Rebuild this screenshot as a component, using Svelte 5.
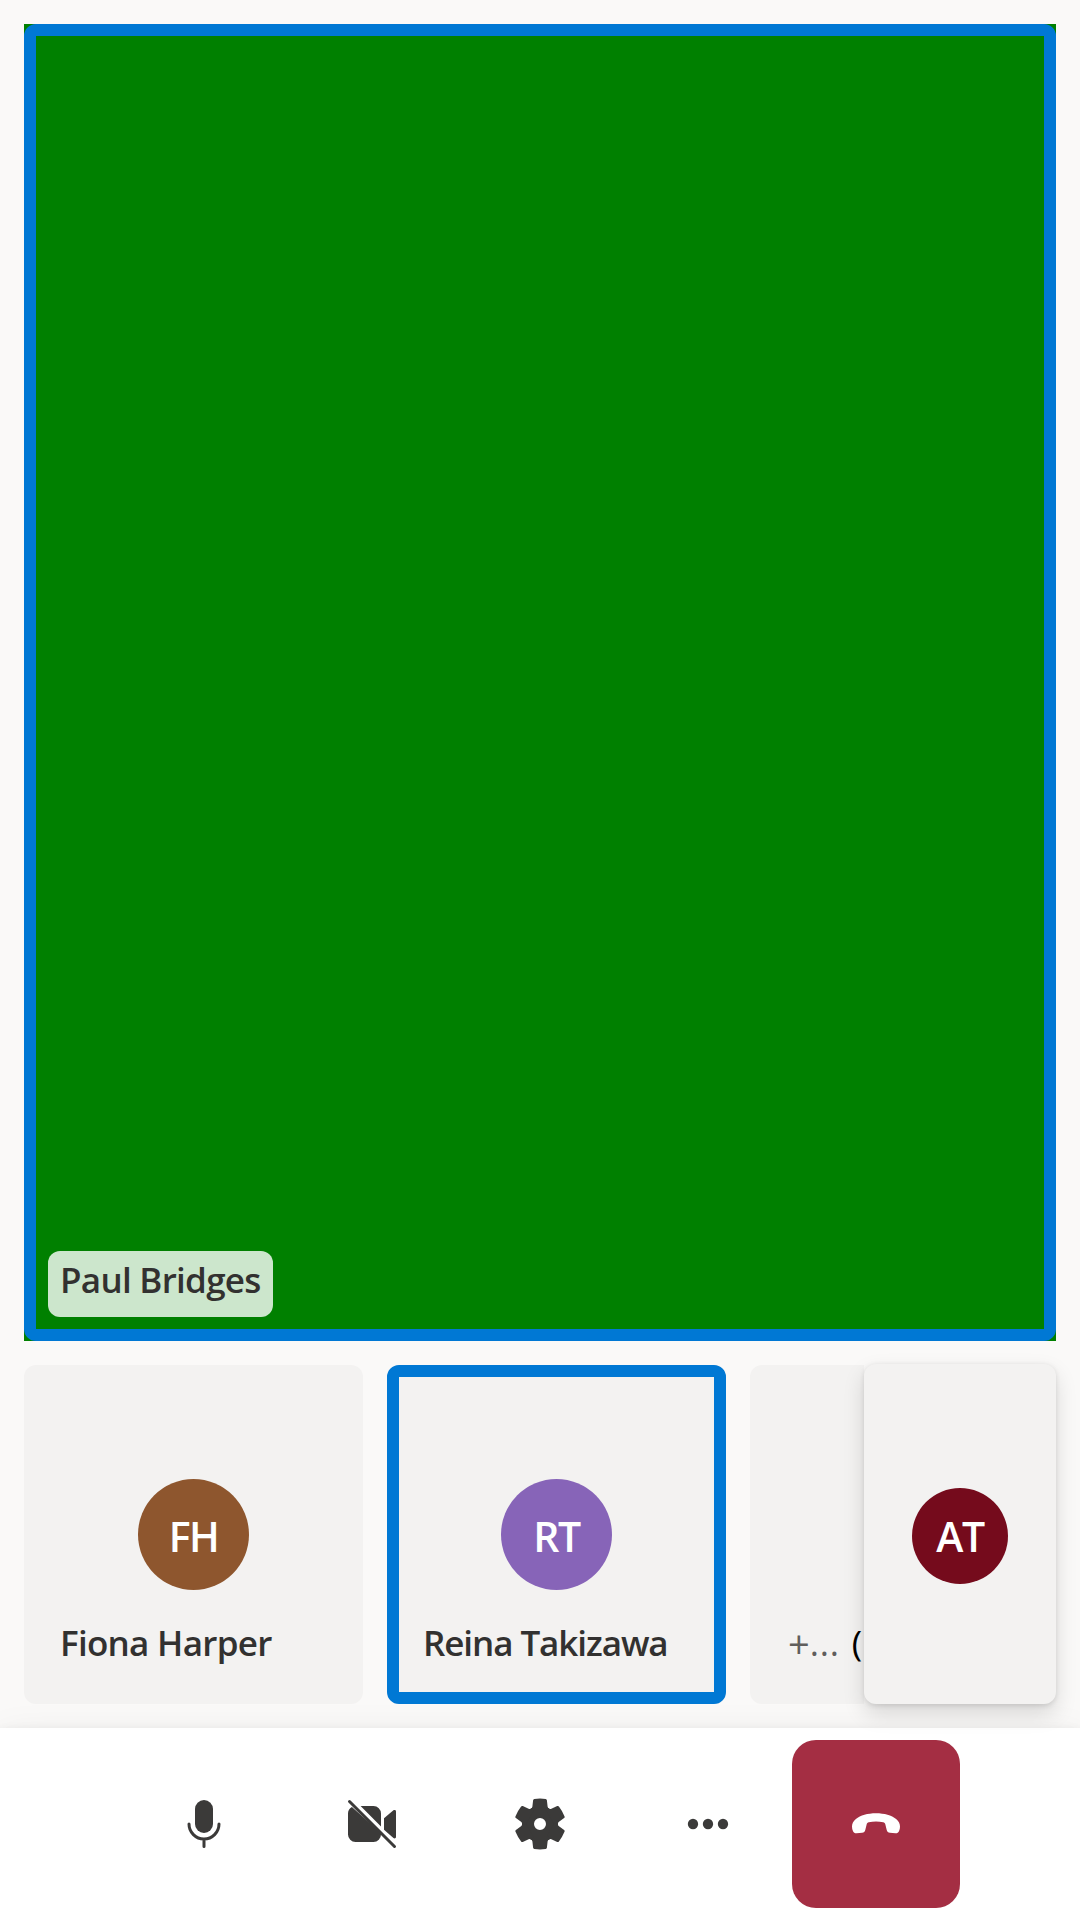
<script>
  const people = [
    { name: 'Fiona Harper', initials: 'FH', tone: 'brown', speaking: false },
    { name: 'Reina Takizawa', initials: 'RT', tone: 'purple', speaking: true }
  ];
  const teeth = [0, 60, 120, 180, 240, 300];
</script>

<div class="call">
  <main>
    <section class="stage speaking">
      <div class="tag">Paul Bridges</div>
    </section>
    <section class="gallery">
      {#each people as p}
        <article class="tile" class:speaking={p.speaking}>
          <div class="avatar {p.tone}">{p.initials}</div>
          <div class="name" class:tight={p.speaking}>{p.name}</div>
        </article>
      {/each}
      <article class="tile phone">
        <div class="name caller"><span class="muted"><span class="plus">+</span><span class="dots">...</span></span><span class="paren">(</span></div>
      </article>
      <aside class="local"><div class="avatar small">AT</div></aside>
    </section>
  </main>

  <nav>
    <button aria-label="Microphone">
      <svg viewBox="0 0 20 20">
        <rect x="7" y="2" width="6" height="11" rx="3" />
        <path class="line" d="M5 10a5 5 0 0 0 10 0M10 15v2.5" />
      </svg>
    </button>
    <button aria-label="Camera">
      <svg viewBox="0 0 20 20">
        <path d="M6.2 4h4.3A2.5 2.5 0 0 1 13 6.5v4.3z" />
        <path d="M3.3 4.3A2.5 2.5 0 0 0 2 6.5v7A2.5 2.5 0 0 0 4.5 16h6a2.5 2.5 0 0 0 2.5-2.5V13z" />
        <path d="M14 8.05l3.15-2.6c.4-.3.85-.1.85.35v8.5c0 .45-.5.65-.85.35L14 11.9z" />
        <path class="line" d="M2.5 2.5l15 15" />
      </svg>
    </button>
    <button aria-label="Settings">
      <svg viewBox="0 0 20 20">
        <circle cx="10" cy="10" r="4" class="ring" />
        {#each teeth as a}
          <path transform="rotate({a} 10 10)" d="M6.5 5c.55 0 .9-.3.97-.85l.23-2.1c.03-.25.17-.38.4-.42Q10 1.37 11.9 1.63c.23.04.37.17.4.42l.23 2.1c.07.55.42.85.97.85L12.5 6h-5z" />
        {/each}
      </svg>
    </button>
    <button aria-label="More">
      <svg viewBox="0 0 20 20">
        <circle cx="5" cy="10" r="1.72" /><circle cx="10" cy="10" r="1.72" /><circle cx="15" cy="10" r="1.72" />
      </svg>
    </button>
    <button class="leave" aria-label="Leave">
      <svg viewBox="0 0 20 20">
        <path d="M10 6.4c2.8 0 5.2.7 6.7 1.9.9.75 1.3 1.5 1.3 2.5 0 .55-.1 1-.28 1.45-.25.6-.62.85-1.22.85-.65 0-1.3-.05-1.85-.15-.6-.1-.95-.45-1.1-1.05l-.45-1.8c-.1-.4-.3-.6-.7-.7-1.5-.35-3.3-.35-4.8 0-.4.1-.6.3-.7.7l-.45 1.8c-.15.6-.5.95-1.1 1.05-.55.1-1.2.15-1.85.15-.6 0-.97-.25-1.22-.85A3.8 3.8 0 0 1 2 10.8c0-1 .4-1.75 1.3-2.5C4.8 7.1 7.200 6.4 10 6.4z" />
      </svg>
    </button>
  </nav>
</div>

<style>
  :global(body) { margin: 0; }
  * { box-sizing: border-box; }
  .call {
    width: 1080px; height: 1920px; display: flex; flex-direction: column; overflow: hidden;
    background: #faf9f8; color: #323130;
    font-family: "Open Sans", "Noto Sans", sans-serif; font-weight: 600; font-size: 35px;
    letter-spacing: -.72px;
  }
  main { flex: 1; display: flex; flex-direction: column; gap: 24px; padding: 24px; }
  .stage { flex: 1; display: flex; align-items: flex-end; padding: 24px; background: #008000; }
  .speaking { position: relative; }
  .speaking::after {
    content: ""; position: absolute; inset: 0; border: 12px solid #0078d4; border-radius: 12px;
  }
  .tag {
    height: 66px; width: 225px; padding: 0 12px; border-radius: 12px;
    background: rgba(255, 255, 255, .8); line-height: 58px; white-space: nowrap;
  }
  .gallery { height: 339px; display: flex; gap: 24px; position: relative; z-index: 2; }
  .tile {
    flex: none; width: 339px; height: 339px; border-radius: 12px; background: #f3f2f1;
    display: flex; flex-direction: column; align-items: center; padding-top: 114px;
  }
  .avatar {
    width: 111px; height: 111px; border-radius: 50%; color: #fff; font-size: 41px;
    line-height: 115px; text-align: center; letter-spacing: -1.5px;
  }
  .brown { background: #8e562e; }
  .purple { background: #8764b8; }
  .name { align-self: stretch; padding-left: 36px; margin-top: 24px; line-height: 58px; white-space: nowrap; }
  .tight { letter-spacing: -1.08px; }
  .phone { width: 114px; border-radius: 12px 0 0 12px; }
  .caller { margin-top: 135px; padding-left: 38px; font-weight: 400; display: flex; gap: 12px; letter-spacing: 0; }
  .muted { color: #605e5c; display: flex; }
  .plus { font-size: 38px; }
  .dots { letter-spacing: .8px; }
  .paren { color: #000; }
  .local {
    position: absolute; right: 0; top: -1px; width: 192px; height: 340px; border-radius: 12px;
    background: #f3f2f1; display: flex; align-items: center; justify-content: center; padding-top: 3px;
    box-shadow: 0 9.6px 21.6px rgba(0, 0, 0, .132), 0 1.8px 5.4px rgba(0, 0, 0, .108);
  }
  .small { width: 96px; height: 96px; line-height: 97px; background: #750b1c; }
  nav {
    height: 192px; display: flex; justify-content: center; align-items: center; background: #fff;
    position: relative; z-index: 1;
    box-shadow: 0 19.2px 43.2px rgba(0, 0, 0, .132), 0 3.6px 10.8px rgba(0, 0, 0, .108);
  }
  button {
    width: 168px; height: 168px; border: 0; padding: 0; border-radius: 24px; background: #fff;
    display: grid; place-items: center; color: #3b3a39;
  }
  svg { width: 60px; height: 60px; display: block; fill: currentColor; }
  .line { fill: none; stroke: currentColor; stroke-width: 1; stroke-linecap: round; }
  .ring { fill: none; stroke: currentColor; stroke-width: 4; }
  .leave { background: #a42e43; color: #fff; }
</style>
